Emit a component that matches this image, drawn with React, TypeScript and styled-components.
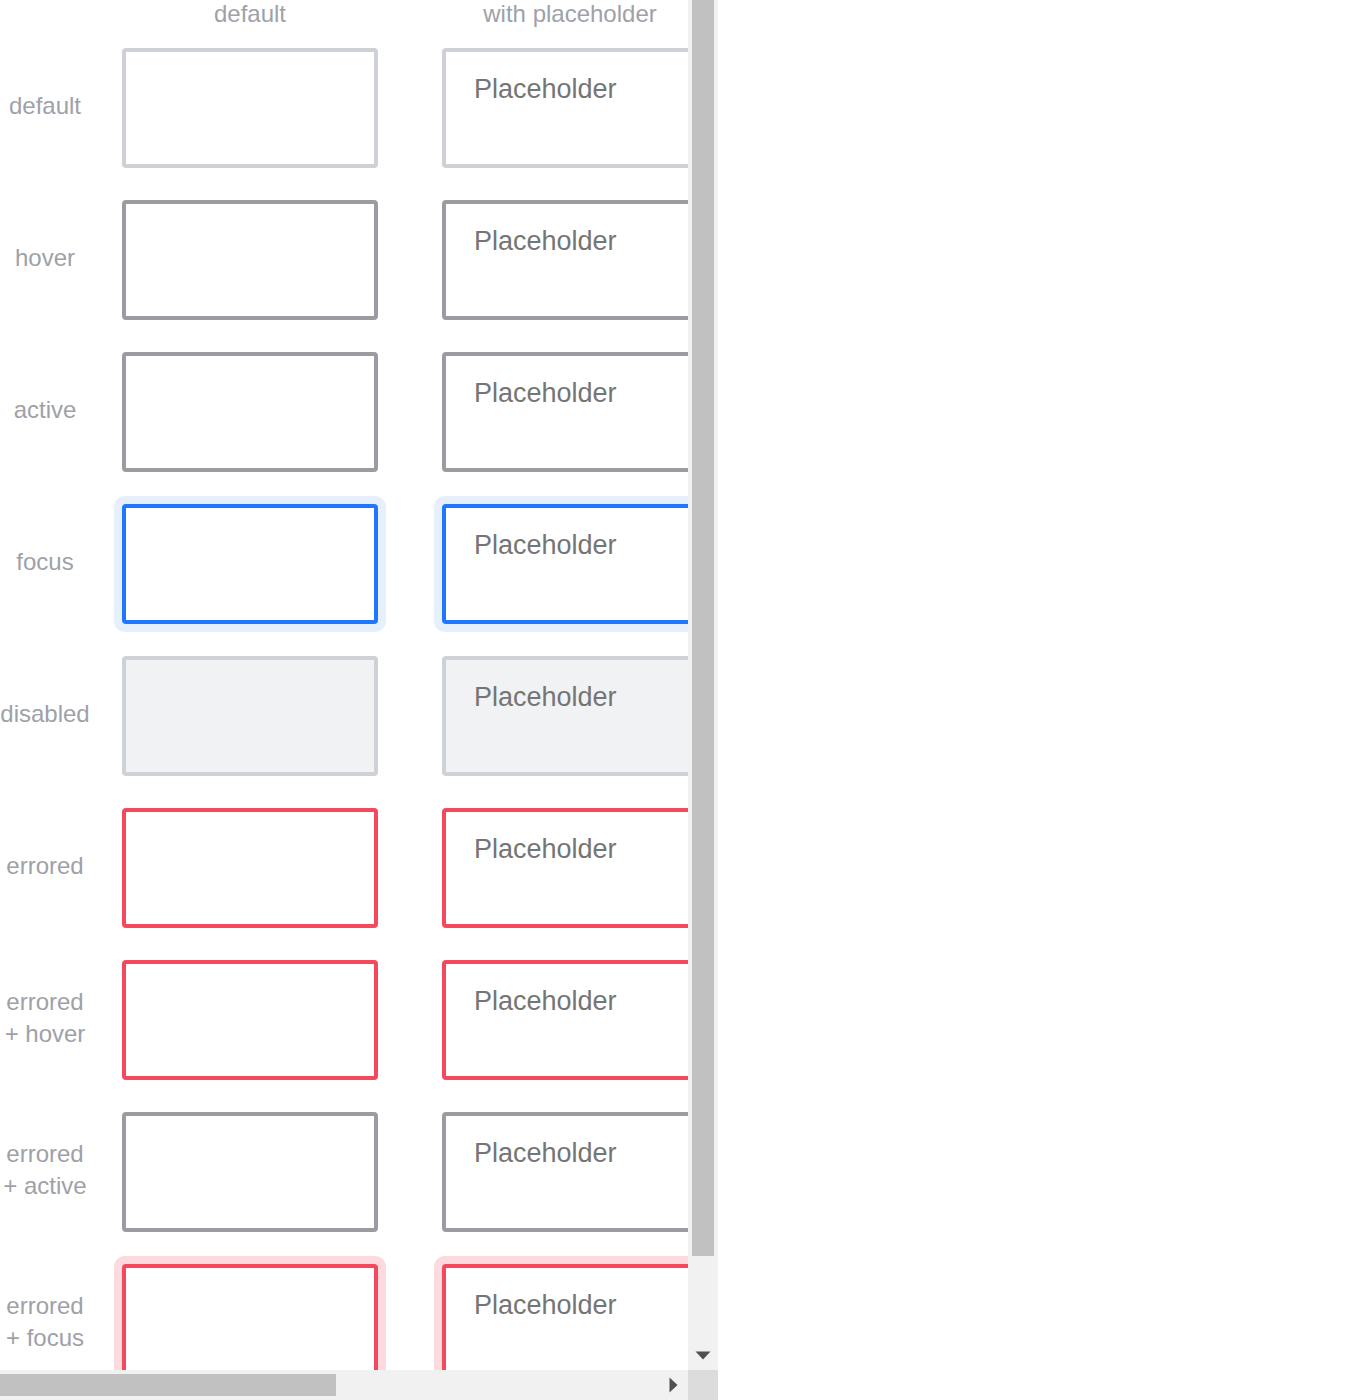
import React from "react";
import styled, { createGlobalStyle, css } from "styled-components";

type FieldState =
  | "default"
  | "hover"
  | "active"
  | "focus"
  | "disabled"
  | "errored"
  | "erroredHover"
  | "erroredActive"
  | "erroredFocus";

const colors = {
  label: "#9ea1a8",
  border: "#ced1d5",
  borderStrong: "#9b9ca2",
  focus: "#2176ff",
  focusRing: "#e6effc",
  error: "#f3485e",
  errorRing: "#fddade",
  disabledBg: "#f1f2f4",
  placeholder: "#757575",
  track: "#f1f1f1",
  thumb: "#c1c1c1",
  corner: "#dcdcdc",
  arrow: "#505050",
};

const GlobalStyle = createGlobalStyle`
  html, body {
    margin: 0;
    padding: 0;
    background: #ffffff;
    font-family: "Liberation Sans", Arial, Helvetica, sans-serif;
  }
`;

// scroll frame: content pane + painted scrollbars
const Frame = styled.div`
  display: grid;
  grid-template-columns: 688px 30px;
  grid-template-rows: 1370px 30px;
  width: 718px;
  height: 1400px;
  background: #ffffff;
`;

const Pane = styled.div`
  overflow: hidden;
`;

const ScrollTrack = styled.div<{ $dir: "v" | "h" }>`
  display: flex;
  flex-direction: ${({ $dir }) => ($dir === "v" ? "column" : "row")};
  background: ${colors.track};
`;

const Thumb = styled.div<{ $dir: "v" | "h"; $size: number }>`
  background: ${colors.thumb};
  flex: none;
  ${({ $dir, $size }) =>
    $dir === "v"
      ? css`
          height: ${$size}px;
          margin: 0 4px;
        `
      : css`
          width: ${$size}px;
          margin: 4px 0;
        `}
`;

const Spacer = styled.div`
  flex: 1;
`;

const ArrowButton = styled.div`
  flex: none;
  width: 30px;
  height: 30px;
  display: flex;
  align-items: center;
  justify-content: center;

  svg {
    display: block;
  }
`;

const Corner = styled.div`
  background: ${colors.corner};
`;

const Sheet = styled.div`
  width: max-content;
  padding-bottom: 46px;
`;

const columns = css`
  display: grid;
  grid-template-columns: 90px repeat(2, 320px);
`;

const HeaderRow = styled.div`
  ${columns};
  height: 28px;
  margin-bottom: 20px;
`;

const ColumnTitle = styled.div`
  padding-left: 32px;
  width: 256px;
  text-align: center;
  font-size: 24px;
  line-height: 28px;
  color: ${colors.label};
  white-space: nowrap;
`;

const Rows = styled.div`
  display: flex;
  flex-direction: column;
  gap: 32px;
`;

const Row = styled.div`
  ${columns};
  height: 120px;
  align-items: center;
`;

const RowLabel = styled.div`
  text-align: center;
  font-size: 24px;
  line-height: 32px;
  padding-bottom: 4px;
  color: ${colors.label};
`;

const Cell = styled.div`
  padding-left: 32px;
  height: 120px;
`;

const stateStyles: Record<FieldState, ReturnType<typeof css>> = {
  default: css``,
  hover: css`
    border-color: ${colors.borderStrong};
  `,
  active: css`
    border-color: ${colors.borderStrong};
  `,
  focus: css`
    border-color: ${colors.focus};
    box-shadow: 0 0 0 8px ${colors.focusRing};
  `,
  disabled: css`
    background: ${colors.disabledBg};
  `,
  errored: css`
    border-color: ${colors.error};
  `,
  erroredHover: css`
    border-color: ${colors.error};
  `,
  erroredActive: css`
    border-color: ${colors.borderStrong};
  `,
  erroredFocus: css`
    border-color: ${colors.error};
    box-shadow: 0 0 0 8px ${colors.errorRing};
  `,
};

const Field = styled.textarea<{ $state: FieldState }>`
  display: block;
  box-sizing: border-box;
  width: 256px;
  height: 120px;
  margin: 0;
  padding: 22px 27px 22px 28px;
  border: 4px solid ${colors.border};
  border-radius: 4px;
  background: #ffffff;
  color: #333333;
  font-family: "Liberation Sans", Arial, Helvetica, sans-serif;
  font-size: 27px;
  line-height: 31px;
  resize: none;
  overflow: hidden;
  outline: none;

  &::placeholder {
    color: ${colors.placeholder};
    opacity: 1;
  }

  ${({ $state }) => stateStyles[$state]}
`;

const states: { key: FieldState; label: string[] }[] = [
  { key: "default", label: ["default"] },
  { key: "hover", label: ["hover"] },
  { key: "active", label: ["active"] },
  { key: "focus", label: ["focus"] },
  { key: "disabled", label: ["disabled"] },
  { key: "errored", label: ["errored"] },
  { key: "erroredHover", label: ["errored", "+ hover"] },
  { key: "erroredActive", label: ["errored", "+ active"] },
  { key: "erroredFocus", label: ["errored", "+ focus"] },
];

const variants = [
  { title: "default", placeholder: undefined },
  { title: "with placeholder", placeholder: "Placeholder" },
];

export default function App() {
  return (
    <>
      <GlobalStyle />
      <Frame>
        <Pane>
          <Sheet>
            <HeaderRow>
              <div />
              {variants.map((v) => (
                <ColumnTitle key={v.title}>{v.title}</ColumnTitle>
              ))}
            </HeaderRow>
            <Rows>
              {states.map((s) => (
                <Row key={s.key}>
                  <RowLabel>
                    {s.label.map((line) => (
                      <div key={line}>{line}</div>
                    ))}
                  </RowLabel>
                  {variants.map((v) => (
                    <Cell key={v.title}>
                      <Field
                        $state={s.key}
                        placeholder={v.placeholder}
                        disabled={s.key === "disabled"}
                        readOnly
                      />
                    </Cell>
                  ))}
                </Row>
              ))}
            </Rows>
          </Sheet>
        </Pane>
        <ScrollTrack $dir="v">
          <Thumb $dir="v" $size={1256} />
          <Spacer />
          <ArrowButton>
            <svg width="16" height="9" viewBox="0 0 16 9">
              <polygon points="0.5,0.5 15.5,0.5 8,8.5" fill={colors.arrow} />
            </svg>
          </ArrowButton>
        </ScrollTrack>
        <ScrollTrack $dir="h">
          <Thumb $dir="h" $size={336} />
          <Spacer />
          <ArrowButton>
            <svg width="9" height="16" viewBox="0 0 9 16">
              <polygon points="0.5,0.5 8.5,8 0.5,15.5" fill={colors.arrow} />
            </svg>
          </ArrowButton>
        </ScrollTrack>
        <Corner />
      </Frame>
    </>
  );
}
